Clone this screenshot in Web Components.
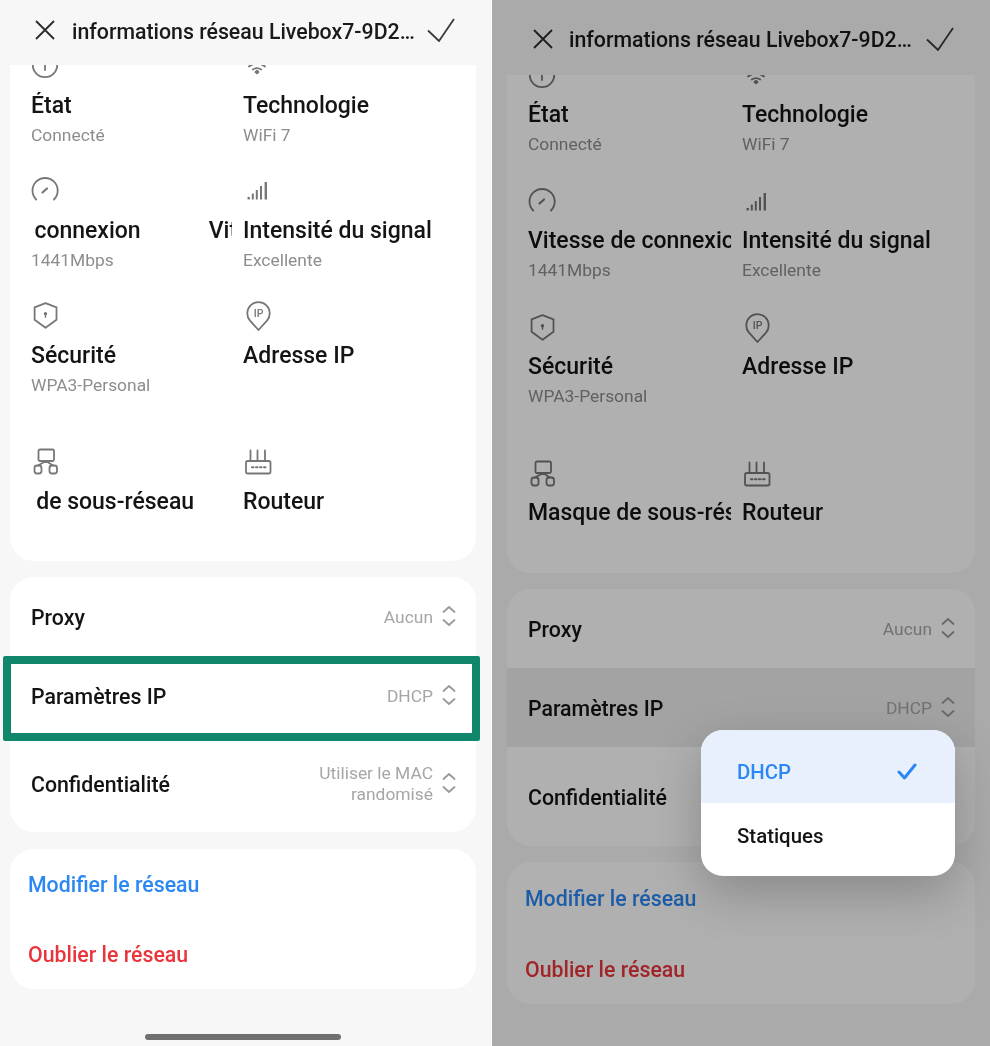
<!DOCTYPE html>
<html lang="fr">
<head>
<meta charset="utf-8">
<title>Informations réseau</title>
<style>
  html, body { margin: 0; height: 100%; }
  body {
    display: flex;
    width: 990px;
    height: 1046px;
    overflow: hidden;
    background: #f7f7f7;
    font-family: Roboto, "Liberation Sans", sans-serif;
    color: #111;
  }
</style>
</head>
<body>

<phone-screen style="--w:491px;--bar:65px;--bar-pt:0px;--bar-pb:5px;--t-mt:2px;--t-gap:17px;--ml:10px;--mr:15px;--col:201px;--card-h:496px;--gap2:17px;--r3:97px;--a-h:70px;--bar-x:35px;--pitch:125px;--lab-mt:13px">
  <top-bar>informations réseau Livebox7-9D2…</top-bar>
  <info-card>
    <info-item icon="info" value="Connecté">État</info-item>
    <info-item icon="wifi" value="WiFi 7">Technologie</info-item>
    <info-item icon="speed" value="1441Mbps" shift="-110">Vitesse de connexion</info-item>
    <info-item icon="signal" value="Excellente">Intensité du signal</info-item>
    <info-item icon="shield" value="WPA3-Personal">Sécurité</info-item>
    <info-item icon="pin">Adresse IP</info-item>
    <info-item icon="subnet" shift="-83">Masque de sous-réseau</info-item>
    <info-item icon="router">Routeur</info-item>
  </info-card>
  <list-card>
    <select-row>Proxy<span slot="value">Aucun</span></select-row>
    <select-row>Paramètres IP<span slot="value">DHCP</span><mark-box slot="mark"></mark-box></select-row>
    <select-row tall>Confidentialité<span slot="value">Utiliser le MAC<br>randomisé</span></select-row>
  </list-card>
  <list-card last>
    <action-row kind="blue">Modifier le réseau</action-row>
    <action-row kind="red">Oublier le réseau</action-row>
  </list-card>
  <home-bar></home-bar>
</phone-screen>

<phone-screen dim style="--w:499px;--bar:75px;--bar-pt:3px;--bar-pb:0px;--t-mt:0px;--t-gap:16px;--ml:15px;--mr:15px;--col:203px;--card-h:498px;--r3:99px;--a-h:71px;--bar-x:41px;--gap2:16px;--pitch:126px;--lab-mt:12px">
  <top-bar>informations réseau Livebox7-9D2…</top-bar>
  <info-card>
    <info-item icon="info" value="Connecté">État</info-item>
    <info-item icon="wifi" value="WiFi 7">Technologie</info-item>
    <info-item icon="speed" value="1441Mbps">Vitesse de connexion</info-item>
    <info-item icon="signal" value="Excellente">Intensité du signal</info-item>
    <info-item icon="shield" value="WPA3-Personal">Sécurité</info-item>
    <info-item icon="pin">Adresse IP</info-item>
    <info-item icon="subnet">Masque de sous-réseau</info-item>
    <info-item icon="router">Routeur</info-item>
  </info-card>
  <list-card>
    <select-row>Proxy<span slot="value">Aucun</span></select-row>
    <select-row pressed>Paramètres IP<span slot="value">DHCP</span></select-row>
    <select-row tall>Confidentialité<span slot="value">Utiliser le MAC<br>randomisé</span></select-row>
  </list-card>
  <list-card last>
    <action-row kind="blue">Modifier le réseau</action-row>
    <action-row kind="red">Oublier le réseau</action-row>
  </list-card>
  <pop-menu slot="over">
    <menu-option selected>DHCP</menu-option>
    <menu-option>Statiques</menu-option>
  </pop-menu>
</phone-screen>

<script>
// line icons, all on a 28 box
const ICONS = {
  info: '<circle cx="14" cy="14" r="12.2"/><path d="M14 14v5"/>',
  wifi: '<path d="M6 15.5Q14 9.5 22 15.5"/><path d="M9.8 18.5Q14 15.8 18.2 18.5"/><path d="M12.5 21l1.5-1.2 1.5 1.2-1.5 1.4z" fill="#777"/>',
  speed: '<path d="M5.2 23.500A12.600 12.600 0 1 1 23 23.500"/><path d="M11.5 16.500l4.500-4" stroke-width="2.200"/>',
  signal: '<g stroke="none" fill="#777"><rect x="4.500" y="21" width="2.400" height="2.400"/><rect x="8.800" y="17.500" width="2" height="6"/><rect x="12.800" y="14" width="2" height="9.500"/><rect x="17" y="10" width="2" height="13.500"/><rect x="21.600" y="6" width="2.400" height="17.500"/></g>',
  shield: '<path d="M14.500 2.200l11 4.200v12.400L14.500 26.800 3.600 18.800V6.400z"/><circle cx="14.500" cy="12.800" r="1.700" fill="#777" stroke="none"/><path d="M14.500 13v3.200" stroke-width="1.400"/>',
  pin: '<path d="M15.500 29L7 19.600A11.200 11.200 0 1 1 24 19.600z"/><text x="15.500" y="16" font-size="10.500" font-weight="500" text-anchor="middle" fill="#777" stroke="none" font-family="Roboto, sans-serif">IP</text>',
  subnet: '<rect x="7.500" y="2.500" width="15.500" height="11.500" rx="1.500"/><rect x="3.500" y="18.500" width="7" height="8" rx="2.500"/><rect x="18.500" y="18.500" width="7.500" height="8" rx="2.500"/><path d="M15 14l-8 4.500M15 14l7 4.500"/>',
  router: '<rect x="3" y="14" width="24.500" height="12.500" rx="1.800"/><path d="M7.500 3.500V14M14.500 3.500V14M22 3.500V14"/><path d="M9 20.200h1.500M13 20.200h1.500M17 20.200h1.500M21 20.200h1.500" stroke-width="2"/>'
};

const CHEVRON = '<svg width="16" height="24" viewBox="0 0 16 24" fill="none" stroke="#9a9a9a" stroke-width="1.800" stroke-linecap="round" stroke-linejoin="round"><path d="M2.500 7L8 2l5.500 5"/><path d="M2.500 15L8 20l5.500-5"/></svg>';

class PhoneScreen extends HTMLElement {
  constructor() {
    super();
    this.attachShadow({ mode: 'open' }).innerHTML = `
      <style>
        :host {
          display: block;
          position: relative;
          flex: none;
          width: var(--w);
          height: 1046px;
          overflow: hidden;
          background: #f7f7f7;
          filter: blur(.3px);
        }
        .scrim { display: none; }
        :host([dim]) .scrim {
          display: block;
          position: absolute;
          inset: 0;
          background: rgba(0, 0, 0, .31);
        }
        :host([dim]) { border-left: 1px solid #fff; box-sizing: border-box; }
      </style>
      <slot></slot>
      <div class="scrim"></div>
      <slot name="over"></slot>`;
  }
}

class TopBar extends HTMLElement {
  constructor() {
    super();
    this.attachShadow({ mode: 'open' }).innerHTML = `
      <style>
        :host {
          display: flex;
          align-items: center;
          box-sizing: border-box;
          height: var(--bar);
          padding: var(--bar-pt) 36px var(--bar-pb) var(--bar-x);
          color: #1a1a1a;
        }
        svg { flex: none; }
        .t {
          flex: 1;
          min-width: 0;
          margin: var(--t-mt) 0 0 var(--t-gap);
          font-size: 21.300px;
          font-weight: 500;
          white-space: nowrap;
          overflow: hidden;
        }
      </style>
      <svg width="20" height="20" viewBox="0 0 20 20" fill="none" stroke="#2a2a2a" stroke-width="1.800"><path d="M1 1l18 18M19 1L1 19"/></svg>
      <div class="t"><slot></slot></div>
      <svg width="28" height="24" viewBox="0 0 28 24" fill="none" stroke="#3a3a3a" stroke-width="1.800"><path d="M1 12.500L12 23 27 1"/></svg>`;
  }
}

class InfoCard extends HTMLElement {
  constructor() {
    super();
    this.attachShadow({ mode: 'open' }).innerHTML = `
      <style>
        :host {
          display: block;
          height: var(--card-h);
          margin: 0 var(--mr) 0 var(--ml);
          background: #fff;
          border-radius: 0 0 24px 24px;
          overflow: hidden;
        }
        /* the list is scrolled a little, so the first icons are cut off */
        .grid {
          display: grid;
          grid-template-columns: var(--col) 1fr;
          grid-template-rows: var(--pitch) var(--pitch) 146px auto;
          column-gap: 11px;
          margin-top: -14px;
          padding-left: 21px;
        }
      </style>
      <div class="grid"><slot></slot></div>`;
  }
}

class InfoItem extends HTMLElement {
  constructor() {
    super();
    this.attachShadow({ mode: 'open' }).innerHTML = `
      <style>
        :host { display: block; min-width: 0; }
        svg { display: block; }
        .label {
          margin-top: var(--lab-mt);
          height: 28px;
          line-height: 28px;
          font-size: 23px;
          font-weight: 500;
          color: #141414;
          white-space: nowrap;
          overflow: hidden;
        }
        .run { display: inline-block; }
        .copy { margin-left: 68px; }
        .value {
          height: 22px;
          line-height: 22px;
          margin-top: 4px;
          font-size: 17.400px;
          color: #8d8d8d;
        }
      </style>
      <svg width="30" height="28" viewBox="0 0 30 28" fill="none" stroke="#777" stroke-width="1.800" stroke-linejoin="round" stroke-linecap="round" overflow="visible"></svg>
      <div class="label"><span class="run"><slot></slot></span></div>
      <div class="value"></div>`;
  }
  connectedCallback() {
    const root = this.shadowRoot;
    root.querySelector('svg').innerHTML = ICONS[this.getAttribute('icon')] || '';
    root.querySelector('.value').textContent = this.getAttribute('value') || '';
    // marquee in progress: the title slides left and its copy follows
    const shift = this.getAttribute('shift');
    if (shift) {
      const run = root.querySelector('.run');
      run.style.marginLeft = shift + 'px';
      const copy = document.createElement('span');
      copy.className = 'copy';
      copy.textContent = this.textContent;
      run.after(copy);
    }
  }
}

class ListCard extends HTMLElement {
  constructor() {
    super();
    this.attachShadow({ mode: 'open' }).innerHTML = `
      <style>
        :host {
          display: block;
          margin: 16px var(--mr) 0 var(--ml);
          background: #fff;
          border-radius: 24px;
        }
        :host([last]) { margin-top: var(--gap2); }
      </style>
      <slot></slot>`;
  }
}

class SelectRow extends HTMLElement {
  constructor() {
    super();
    this.attachShadow({ mode: 'open' }).innerHTML = `
      <style>
        :host {
          display: flex;
          align-items: center;
          position: relative;
          box-sizing: border-box;
          height: 79px;
          padding: 0 19px 0 21px;
          font-size: 21.300px;
          font-weight: 500;
          color: #141414;
        }
        :host([tall]) { height: var(--r3); }
        :host([pressed]) { background: #ececec; }
        .label { flex: 1; margin-top: 1px; }
        .value {
          margin: 1px 8px 0 0;
          text-align: right;
          font-size: 17.400px;
          font-weight: 400;
          line-height: 21px;
          color: #a6a6a6;
        }
        svg { display: block; flex: none; }
      </style>
      <div class="label"><slot></slot></div>
      <div class="value"><slot name="value"></slot></div>
      ${CHEVRON}
      <slot name="mark"></slot>`;
  }
}

// the green annotation drawn on top of the screenshot
class MarkBox extends HTMLElement {
  constructor() {
    super();
    this.attachShadow({ mode: 'open' }).innerHTML = `
      <style>
        :host {
          position: absolute;
          left: -7px;
          right: -4px;
          top: 0;
          bottom: -6px;
          border: 8px solid #10866a;
          border-radius: 2px;
          box-sizing: border-box;
        }
      </style>`;
  }
}

class ActionRow extends HTMLElement {
  constructor() {
    super();
    this.attachShadow({ mode: 'open' }).innerHTML = `
      <style>
        :host {
          display: flex;
          align-items: center;
          box-sizing: border-box;
          height: var(--a-h);
          padding: 1px 0 0 18px;
          font-size: 21.300px;
          font-weight: 500;
        }
        :host([kind="blue"]) { color: #2b87f3; }
        :host([kind="red"]) { color: #e9353b; }
      </style>
      <slot></slot>`;
  }
}

class HomeBar extends HTMLElement {
  constructor() {
    super();
    this.attachShadow({ mode: 'open' }).innerHTML = `
      <style>
        :host {
          display: block;
          width: 196px;
          height: 6px;
          margin: 45px 0 0 145px;
          border-radius: 3px;
          background: #707070;
        }
      </style>`;
  }
}

class PopMenu extends HTMLElement {
  constructor() {
    super();
    this.attachShadow({ mode: 'open' }).innerHTML = `
      <style>
        :host {
          display: block;
          position: absolute;
          left: 209px;
          top: 730px;
          width: 254px;
          background: #fff;
          border-radius: 22px;
          overflow: hidden;
          box-shadow: 0 18px 50px rgba(0, 0, 0, .22);
        }
      </style>
      <slot></slot>`;
  }
}

class MenuOption extends HTMLElement {
  constructor() {
    super();
    this.attachShadow({ mode: 'open' }).innerHTML = `
      <style>
        :host {
          display: flex;
          align-items: center;
          justify-content: space-between;
          height: 73px;
          padding: 0 38px 7px 36px;
          box-sizing: border-box;
          font-size: 20.400px;
          font-weight: 500;
          color: #141414;
        }
        :host([selected]) { background: #e8f0fd; color: #2b87f3; padding-top: 10px; padding-bottom: 0; }
        svg { display: none; }
        :host([selected]) svg { display: block; }
      </style>
      <slot></slot>
      <svg width="20" height="17" viewBox="0 0 20 17" fill="none" stroke="#2b87f3" stroke-width="3" stroke-linecap="round" stroke-linejoin="round"><path d="M2 9l5.500 6L18 2"/></svg>`;
  }
}

customElements.define('phone-screen', PhoneScreen);
customElements.define('top-bar', TopBar);
customElements.define('info-card', InfoCard);
customElements.define('info-item', InfoItem);
customElements.define('list-card', ListCard);
customElements.define('select-row', SelectRow);
customElements.define('mark-box', MarkBox);
customElements.define('action-row', ActionRow);
customElements.define('home-bar', HomeBar);
customElements.define('pop-menu', PopMenu);
customElements.define('menu-option', MenuOption);
</script>
</body>
</html>
